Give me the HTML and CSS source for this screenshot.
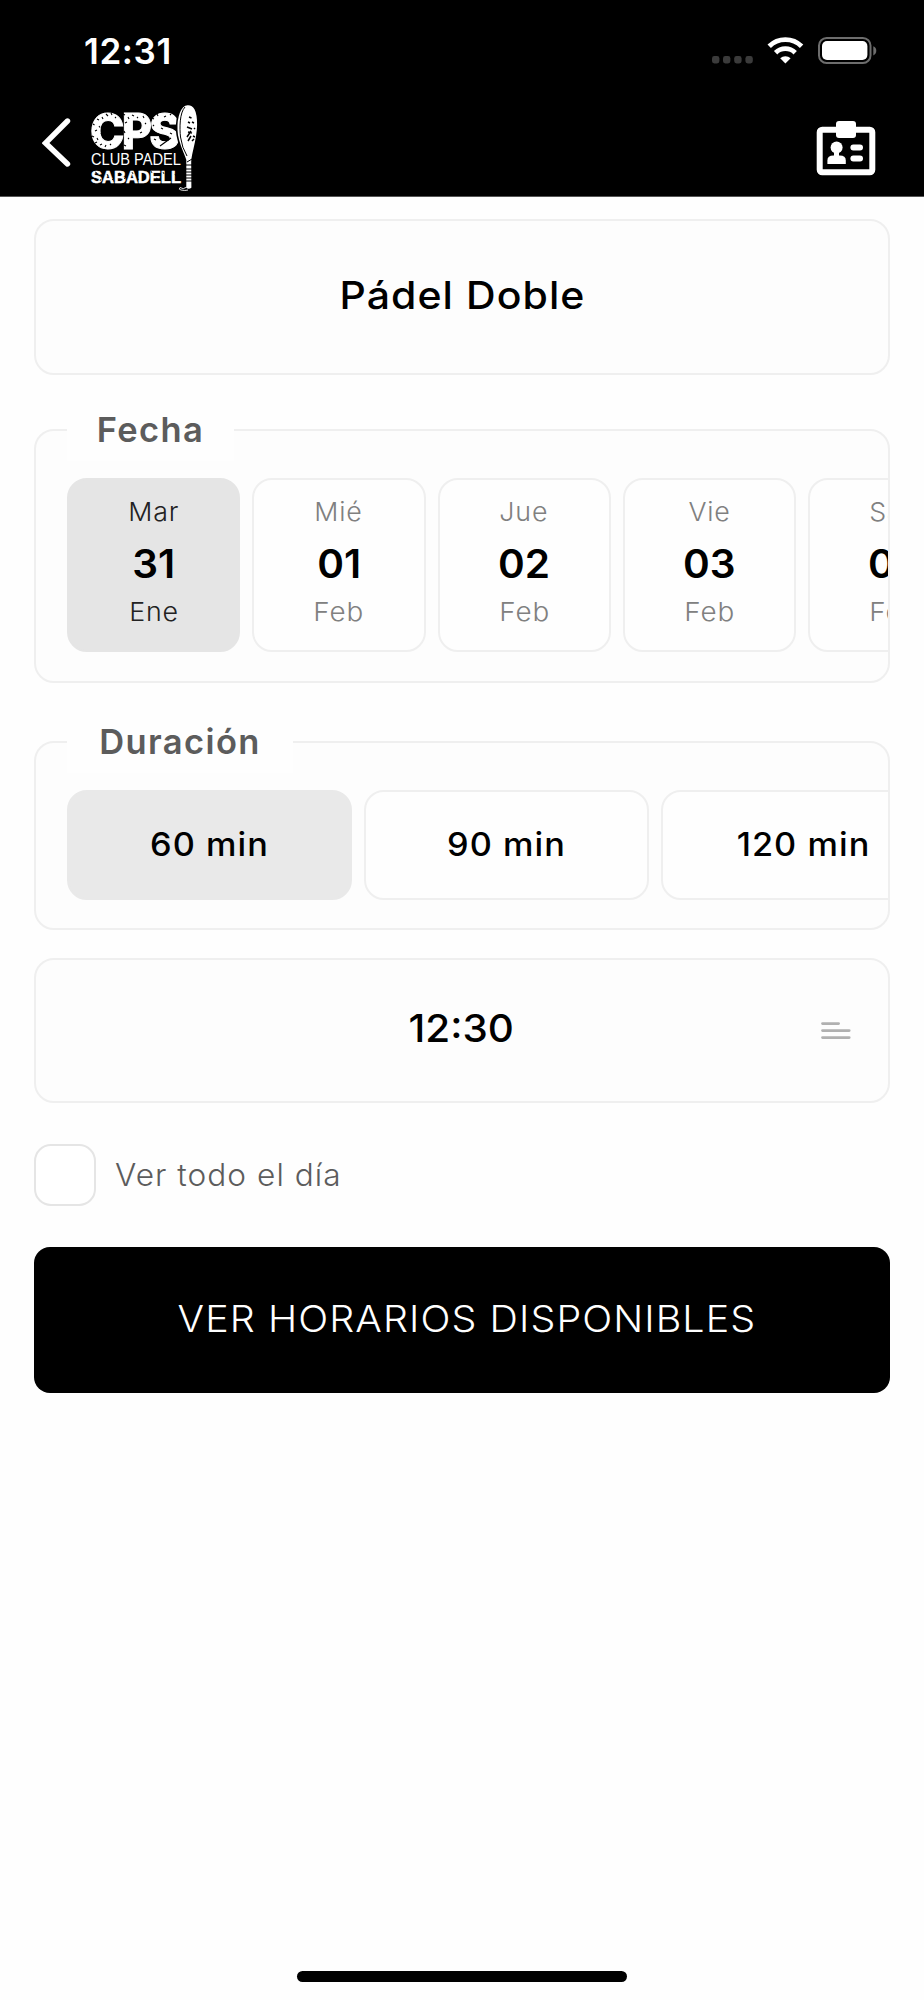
FILE: index.html
```html
<!DOCTYPE html>
<html lang="es">
<head>
<meta charset="utf-8">
<title>Pádel Doble</title>
<link rel="stylesheet" href="styles.css">
</head>
<body>
<header class="header">
  <div class="status">
    <span class="clock">12:31</span>
    <svg class="status-icons" width="166" height="28" viewBox="0 0 166 28">
      <g fill="#3b3b3b"><rect x="0" y="19" width="7.4" height="7.4" rx="2.4"/><rect x="11" y="19" width="7.4" height="7.4" rx="2.4"/><rect x="22.2" y="19" width="7.4" height="7.4" rx="2.4"/><rect x="33.4" y="19" width="7.4" height="7.4" rx="2.4"/></g>
      <g fill="none" stroke="#fff" stroke-width="4.8"><path d="M57.2 9.2a23 23 0 0 1 32.4 0"/><path d="M63.6 15.7a14 14 0 0 1 19.6 0"/></g>
      <path fill="#fff" d="M73.4 26.4l-5.2-5.2a7.6 7.6 0 0 1 10.4 0z"/>
      <rect x="107" y="1" width="51.5" height="25" rx="7.6" fill="none" stroke="#6d6d6d" stroke-width="2"/>
      <rect x="110" y="4" width="45.4" height="19" rx="5" fill="#fff"/>
      <path fill="#6d6d6d" d="M161.3 9.2q3 1.4 3 4.6t-3 4.6z"/>
    </svg>
  </div>
  <div class="nav">
    <svg class="back" width="30" height="52" viewBox="0 0 30 52" fill="none" stroke="#fff" stroke-width="5.4" stroke-linecap="round" stroke-linejoin="miter"><path d="M25.5 4L3.5 26L25.5 47"/></svg>
    <svg class="logo" width="110" height="90" viewBox="0 0 110 90">
      <g fill="#fff">
        <text class="logo-cps" x="0" y="44.500" textLength="87" lengthAdjust="spacingAndGlyphs">CPS</text>
        <text class="logo-club" x="1" y="61" textLength="90" lengthAdjust="spacingAndGlyphs">CLUB PADEL</text>
        <text class="logo-city" x="1" y="79" textLength="90" lengthAdjust="spacingAndGlyphs">SABADELL</text>
        <path stroke="#000" stroke-width="1.6" d="M97.5 0.4C90 1 86.200 13 86.700 26C87 38 93 48 95.500 56L95.500 84Q98.500 87 102.200 84L102 58C102 49 107.500 38 107.900 21C108 6 104 0 97.500 0.400z"/>
        <path d="M97 83q-4 3-7 0.500q-2 2 1 2.500q4 1 7 0" fill="none" stroke="#ddd" stroke-width="1"/>
      </g>
      <g fill="none" stroke="#000">
        <path stroke-width="1" d="M95 3C89.500 9 89.500 24 90.500 33Q92 44 97 52"/>
        <path stroke-width="1.500" d="M99 13l2.500 1M98 18l2 1M102 18l2 1M97 23l5 2M98 28l4 1M104 24l1 1M97 33l4-6M98 37l3-5M103 32l2 1M102 37l2-2"/>
        <path stroke-width="1" d="M96 61h6M96 65h6M96 68h6M96 71h6M96 74h6M96 77h6M97 58l5-3"/>
        <path stroke-width="1.100" d="M3 20l1.500 1M7 15l2 1M5 27l2-1M9 22l1 1.500M2 32l2 1M7 34l1 2M5 39l2-1M10 41l2-1M12 13l1 2M16 10l2 2M21 9l1 2M25 14l1-1M11 29l1 2M15 43l1-2M20 40l1 1M33 10l2 1M38 13l1 2M35 19l2-1M34 27l1 2M38 34l1 1M34 41l2 1M42 11l2 1M47 14l1-1M53 12l1 2M55 20l1-1M45 19l1 1M50 29l2-1M62 14l2 1M67 10l1 2M74 13l2-1M63 21l1 1M71 24l2 1M80 10l1 1M64 35l2 1M70 42l11-8M80 29l2 1M76 18l1 1"/>
        <path stroke-width="1" opacity=".8" d="M5 68l2 1M10 77l1-2M17 70l1 2M22 76l1-1M29 69l2 1M34 74l1 1M42 68l1 2M47 76l2-1M54 70l1 1M61 67l1 2M66 74l2 1M73 68l1 2M77 75l1 1M85 70l1 2M88 77l1-1"/>
      </g>
    </svg>
    <svg class="card-icon" width="60" height="56" viewBox="0 0 60 56">
      <rect x="3.700" y="8.700" width="52.600" height="42.600" rx="2.500" fill="none" stroke="#fff" stroke-width="6"/>
      <rect x="20" y="0" width="20" height="17" rx="3" fill="#fff"/>
      <g fill="#fff"><circle cx="20.600" cy="26.500" r="6"/><rect x="18" y="30" width="5" height="6"/><path d="M11.400 43v-3.500q0-5 6-5h6.400q6 0 6 5V43z"/><rect x="34.400" y="23.400" width="12.600" height="6" rx="3"/><rect x="34.400" y="34.500" width="12.600" height="6" rx="3"/></g>
    </svg>
  </div>
</header>
<main class="content">
  <div class="box sport"><span>Pádel Doble</span></div>

  <section class="group dates">
    <h2 class="legend legend-date">Fecha</h2>
    <div class="scroller">
      <div class="day selected"><span>Mar</span><b>31</b><span>Ene</span></div>
      <div class="day"><span>Mié</span><b>01</b><span>Feb</span></div>
      <div class="day"><span>Jue</span><b>02</b><span>Feb</span></div>
      <div class="day"><span>Vie</span><b>03</b><span>Feb</span></div>
      <div class="day"><span>Sáb</span><b>04</b><span>Feb</span></div>
    </div>
  </section>

  <section class="group durations">
    <h2 class="legend legend-duration">Duración</h2>
    <div class="scroller">
      <div class="duration selected"><span>60 min</span></div>
      <div class="duration"><span>90 min</span></div>
      <div class="duration"><span>120 min</span></div>
    </div>
  </section>

  <div class="box time">
    <span>12:30</span>
    <svg class="lines" width="30" height="18" viewBox="0 0 30 18" stroke="#b0b0b0" stroke-width="2.800" stroke-linecap="round"><path d="M1.500 1.600H17.600M1.500 8.600H28.200M1.500 15.600H28.200"/></svg>
  </div>

  <label class="all-day"><span class="check"></span><span class="check-label">Ver todo el día</span></label>
  <button class="submit"><span>VER HORARIOS DISPONIBLES</span></button>
</main>
<div class="home"></div>
</body>
</html>
```

FILE: styles.css
```css
* { box-sizing: border-box; }
body {
  margin: 0;
  width: 924px;
  height: 2000px;
  overflow: hidden;
  display: flex;
  flex-direction: column;
  background: #fefefe;
  color: #000;
  font-family: Inter, "Liberation Sans", sans-serif;
}
.header { height: 197px; background: #000; border-bottom: 1px solid #555; }
.status {
  height: 100px;
  padding: 36px 46px 0 84px;
  display: flex;
  justify-content: space-between;
  align-items: flex-start;
}
.clock { color: #fff; font-size: 35px; font-weight: 600; line-height: 30px; letter-spacing: .6px; }
.status-icons { margin-top: 1px; }
.nav { display: flex; align-items: flex-start; padding: 0 48px 0 42px; height: 96px; }
.back { margin-top: 17px; }
.logo { margin: 4px 0 0 18px; overflow: visible; }
.logo-cps { font: 800 50px Inter, sans-serif; letter-spacing: -3px; stroke: #fff; stroke-width: 1px; }
.logo-club { font: 400 16px "Liberation Sans", sans-serif; }
.logo-city { font: 700 16.500px "Liberation Sans", sans-serif; stroke: #fff; stroke-width: .5px; }
.card-icon { margin: 20.500px 0 0 auto; }

.content { padding: 22px 34px 0; display: flex; flex-direction: column; }
.box {
  border: 2px solid #efefef;
  border-radius: 20px;
  background: #fdfdfd;
  display: grid;
  place-items: center;
  font-size: 38.500px;
  font-weight: 500;
}
.sport { height: 156px; padding-bottom: 4px; letter-spacing: 1px; }
.sport span { transform: scaleX(1.065); }
.group {
  border: 2px solid #efefef;
  border-radius: 20px;
  background: #fdfdfd;
}
.dates { height: 254px; margin-top: 54px; }
.durations { height: 189px; margin-top: 58px; }
.legend {
  margin: -30px 0 0 31px;
  height: 60px;
  background: #fefefe;
  color: #5c5c5c;
  font-size: 34.500px;
  font-weight: 600;
  line-height: 57px;
  text-align: center;
}
.legend-date { width: 167px; letter-spacing: 1.400px; }
.legend-duration { width: 226px; letter-spacing: 1.400px; }
.scroller { display: flex; gap: 12px; margin-top: 17px; padding-left: 31px; overflow: hidden; }
.day {
  flex: 0 0 173.300px;
  height: 174px;
  border: 2px solid #efefef;
  border-radius: 20px;
  background: #fefefe;
  display: flex;
  flex-direction: column;
  align-items: center;
  padding-top: 12px;
  color: #808080;
  font-size: 26px;
  line-height: 40px;
  letter-spacing: .8px;
}
.day span { font-weight: 350; transform: scaleX(1.03); }
.day b { color: #000; font-size: 39px; font-weight: 600; line-height: 60px; letter-spacing: 0; margin-top: 2px; transform: scaleX(1.04); }
.day b + span { margin-top: -2px; transform: scaleX(1.07); }
.day.selected b + span { transform: scaleX(1.03); }
.day.selected { background: #e5e5e5; border-color: #e5e5e5; color: #222; }
.duration {
  flex: 0 0 285px;
  height: 110px;
  border: 2px solid #efefef;
  border-radius: 20px;
  background: #fefefe;
  text-align: center;
  font-size: 32px;
  font-weight: 500;
  line-height: 105px;
  letter-spacing: 1px;
}
.duration span { display: inline-block; transform: scaleX(1.07); }
.duration.selected { background: #e9e9e9; border-color: #e9e9e9; }
.time { height: 145px; margin-top: 28px; grid-template-columns: 1fr; padding-bottom: 5px; }
.time span { transform: translateX(-1px) scaleX(1.05); }
.time span, .lines { grid-area: 1 / 1; }
.lines { justify-self: end; margin: 6px 37px 0 0; }
.all-day { display: flex; align-items: center; gap: 19px; margin-top: 41px; height: 62px; }
.check { width: 62px; height: 62px; border: 2px solid #e5e5e5; border-radius: 17px; background: #fff; }
.check-label { color: #5c5c5c; font-size: 31px; font-weight: 350; letter-spacing: 1px; line-height: 40px; margin-bottom: 1px; transform: scaleX(1.02); transform-origin: left; }
.submit {
  margin-top: 41px;
  height: 146px;
  border: 0;
  border-radius: 16px;
  background: #000;
  color: #fff;
  font: 350 36.500px Inter, "Liberation Sans", sans-serif;
  padding: 0 0 3px;
  letter-spacing: 1px;
}
.submit span { display: inline-block; transform: translateX(5px) scaleX(1.08); }
.home { width: 330px; height: 11px; border-radius: 6px; background: #000; margin: auto auto 18px; flex: none; }
```
